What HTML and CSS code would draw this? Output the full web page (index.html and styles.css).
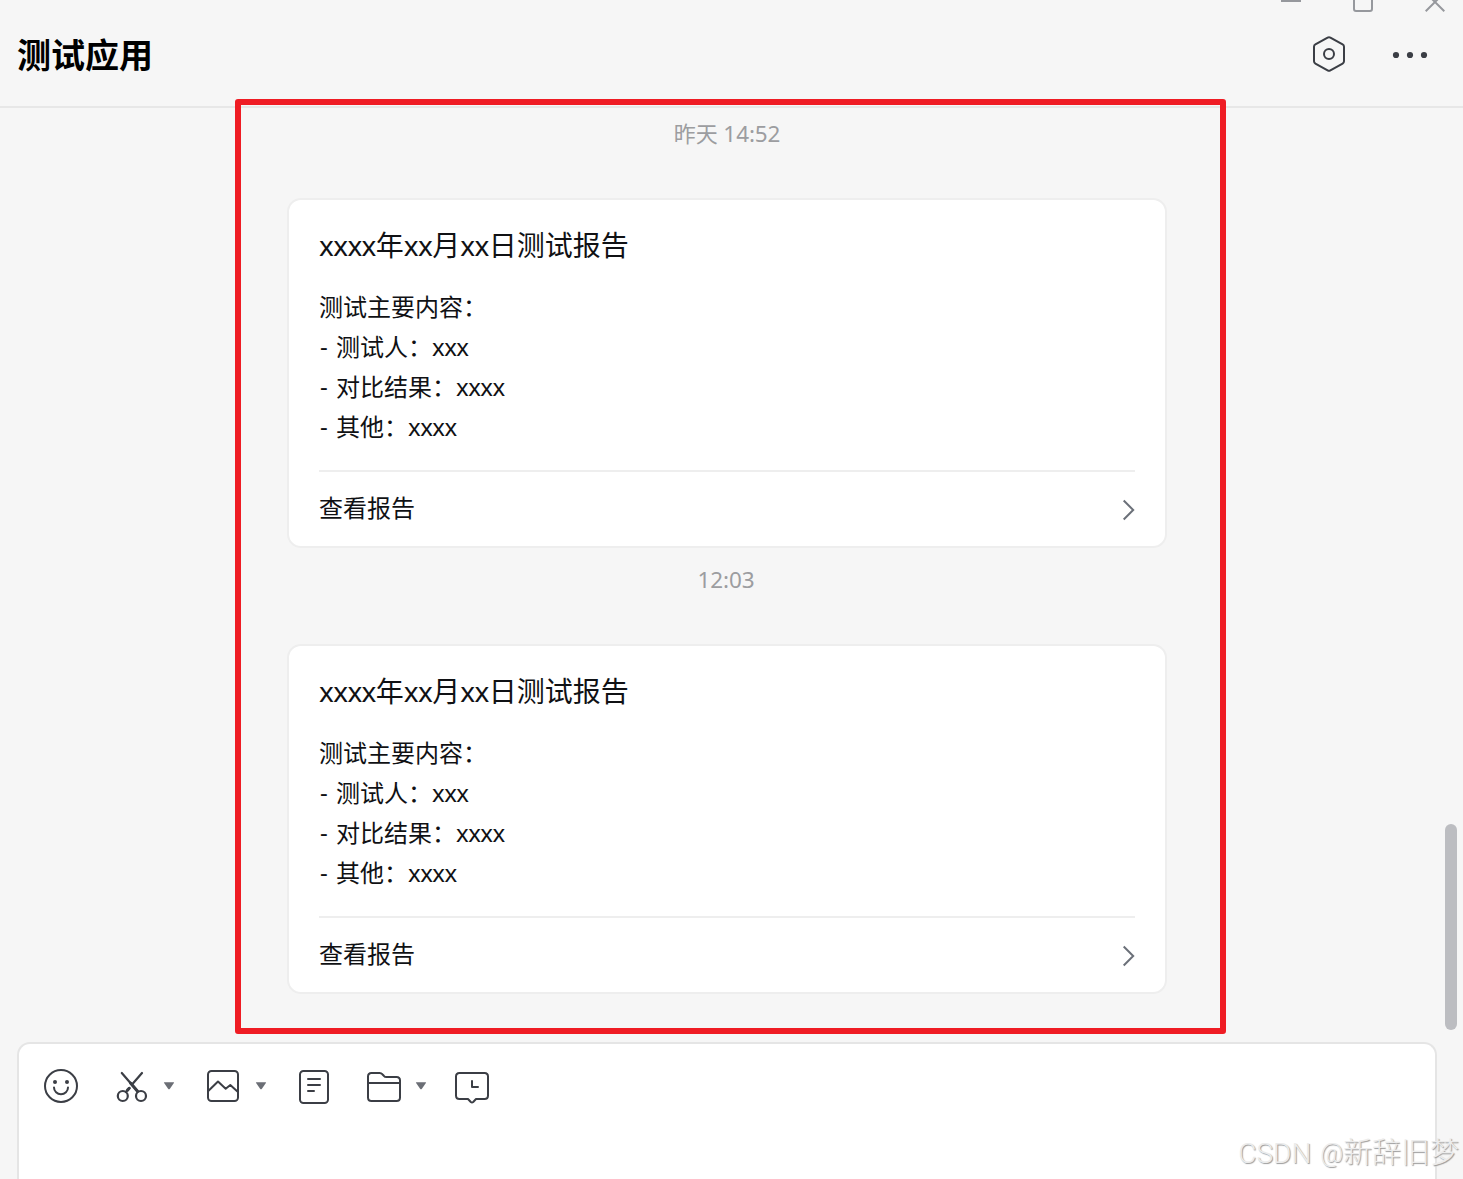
FILE: index.html
```html
<!DOCTYPE html>
<html lang="zh-CN">
<head>
  <meta charset="UTF-8">
  <meta name="viewport" content="width=device-width, initial-scale=1.0">
  <title>测试应用</title>
  <link rel="stylesheet" href="styles.css">
</head>
<body>

  <header class="header">
    <div class="window-controls">
      <svg width="20" height="14" viewBox="0 0 20 14"><path d="M0 1h20"/></svg>
      <svg width="20" height="14" viewBox="0 0 20 14"><rect x="1" y="-7" width="18" height="18" rx="2"/></svg>
      <svg width="20" height="14" viewBox="0 0 20 14"><path d="M.7 -7.3l18.6 18.6M19.3 -7.3L.7 11.3"/></svg>
    </div>
    <div class="header-row">
      <h1>测试应用</h1>
      <div class="header-actions">
        <svg class="icon" width="34" height="38" viewBox="0 0 34 38">
          <path d="M15.6 2.6q1.4-.8 2.8 0l12.2 6.8q1.4.8 1.4 2.3v14.6q0 1.5-1.4 2.3l-12.2 6.8q-1.4.8-2.8 0l-12.2-6.8q-1.4-.8-1.4-2.3v-14.6q0-1.5 1.4-2.3z"/>
          <circle cx="17" cy="19" r="5"/>
        </svg>
        <svg class="dots" width="36" height="38" viewBox="0 0 36 38">
          <circle cx="4" cy="20" r="3.1"/><circle cx="18" cy="20" r="3.1"/><circle cx="32" cy="20" r="3.1"/>
        </svg>
      </div>
    </div>
  </header>

  <main class="chat">
    <div class="time">昨天 <span>14:52</span></div>
    <div class="card">
      <h2><span class="x">xxxx</span>年<span class="x">xx</span>月<span class="x">xx</span>日测试报告</h2>
      <div class="card-body">
        <p>测试主要内容：</p>
        <p><span class="dash">- </span>测试人：<span class="x">xxx</span></p>
        <p><span class="dash">- </span>对比结果：<span class="x">xxxx</span></p>
        <p><span class="dash">- </span>其他：<span class="x">xxxx</span></p>
      </div>
      <div class="card-footer">
        <span>查看报告</span>
        <svg class="arrow" width="13" height="22" viewBox="0 0 13 22"><path d="M1.7 1.5l9.5 9.5-9.5 9.5"/></svg>
      </div>
    </div>

    <div class="time"><span>12:03</span></div>
    <div class="card">
      <h2><span class="x">xxxx</span>年<span class="x">xx</span>月<span class="x">xx</span>日测试报告</h2>
      <div class="card-body">
        <p>测试主要内容：</p>
        <p><span class="dash">- </span>测试人：<span class="x">xxx</span></p>
        <p><span class="dash">- </span>对比结果：<span class="x">xxxx</span></p>
        <p><span class="dash">- </span>其他：<span class="x">xxxx</span></p>
      </div>
      <div class="card-footer">
        <span>查看报告</span>
        <svg class="arrow" width="13" height="22" viewBox="0 0 13 22"><path d="M1.7 1.5l9.5 9.5-9.5 9.5"/></svg>
      </div>
    </div>
    <div class="scrollbar"></div>
    <div class="highlight"></div>
  </main>

  <section class="composer">
    <div class="toolbar">
      <!-- emoji -->
      <svg class="icon emoji" width="34" height="38" viewBox="0 0 34 38">
        <circle cx="17" cy="18" r="16"/>
        <circle class="fill" cx="11" cy="14" r="2"/><circle class="fill" cx="23" cy="14" r="2"/>
        <path d="M10 19.5a7 6.7 0 0 0 14 0"/>
      </svg>
      <!-- screenshot -->
      <svg class="icon scissors" width="32" height="38" viewBox="0 0 32 38">
        <circle cx="6.8" cy="28" r="5"/><circle cx="25" cy="28" r="5"/>
        <path d="M5.8 5l16 18.500M26 5L16 16.500M13.500 20l-3.700 4"/>
        <path class="thick" d="M14.5 15l7 8.200M13.200 20.300l-1.700 1.800"/>
      </svg>
      <svg class="caret" width="12" height="38" viewBox="0 0 12 38"><path d="M1.5 14.2h9q1 0 .4.9l-4 5.7q-.9 1-1.8 0l-4-5.7q-.6-.9.4-.9z"/></svg>
      <!-- image -->
      <svg class="icon image" width="32" height="38" viewBox="0 0 32 38">
        <rect x="1" y="3" width="30" height="30" rx="3.5"/>
        <path d="M1.5 22.8l9.5-9.3 7.7 7.2 4.6-3.7 7.7 7"/>
      </svg>
      <svg class="caret" width="12" height="38" viewBox="0 0 12 38"><path d="M1.5 14.2h9q1 0 .4.9l-4 5.7q-.9 1-1.8 0l-4-5.7q-.6-.9.4-.9z"/></svg>
      <!-- document -->
      <svg class="icon doc" width="30" height="38" viewBox="0 0 30 38">
        <rect x="1" y="3" width="28" height="32" rx="3.5"/>
        <path d="M9 11h12M9 17h12M9 23h6"/>
      </svg>
      <!-- folder -->
      <svg class="icon folder" width="34" height="38" viewBox="0 0 34 38">
        <path d="M4.5 5h8q1.8 0 2.8 1.2l1.5 1.6q1 1.2 2.7 1.2h10q3.5 0 3.5 3.5v17q0 3.5-3.5 3.5h-25q-3.5 0-3.5-3.5v-21q0-3.5 3.5-3.5zM1 15h32"/>
      </svg>
      <svg class="caret" width="12" height="38" viewBox="0 0 12 38"><path d="M1.5 14.2h9q1 0 .4.9l-4 5.7q-.9 1-1.8 0l-4-5.7q-.6-.9.4-.9z"/></svg>
      <!-- history -->
      <svg class="icon history" width="34" height="38" viewBox="0 0 34 38">
        <path d="M4.5 5h25q3.5 0 3.5 3.5v19q0 3.5-3.5 3.5h-8.5l-2.8 3q-1.2 1-2.4 0l-2.8-3h-8.5q-3.5 0-3.5-3.5v-19q0-3.5 3.5-3.5zM17 13v6h6"/>
      </svg>
    </div>
  </section>

  <div class="watermark">CSDN <span class="at">@</span><span class="name">新辞旧梦</span></div>

</body>
</html>
```
FILE: styles.css
```css
* {
  box-sizing: border-box;
  margin: 0;
  padding: 0;
}
body {
  position: relative;
  display: flex;
  flex-direction: column;
  height: 1179px;
  overflow: hidden;
  background-color: #f6f6f6;
  color: #101114;
  font-family: "Noto Sans", "Noto Sans CJK SC", sans-serif;
}
svg {
  display: block;
  fill: none;
}

.header {
  height: 108px;
  border-bottom: 2px solid #e7e7e7;
}
.window-controls {
  display: flex;
  justify-content: flex-end;
  gap: 52px;
  height: 14px;
  padding-right: 18px;
  stroke: #96989d;
  stroke-width: 2;
}
.header-row {
  display: flex;
  justify-content: space-between;
  padding: 15px 35px 0 17px;
}
h1 {
  color: #000;
  font-family: "Noto Sans CJK SC", sans-serif;
  font-size: 34px;
  line-height: 50px;
}
.header-actions {
  display: flex;
  gap: 46px;
  padding-top: 6px;
}
.icon {
  stroke: #3b3e45;
  stroke-width: 2;
  stroke-linecap: round;
  stroke-linejoin: round;
}
.icon .fill {
  fill: #3b3e45;
  stroke: none;
}
.dots {
  fill: #3b3e45;
}

.chat {
  display: flex;
  flex-direction: column;
  align-items: center;
  height: 934px;
  padding-right: 9px;
}
.time {
  height: 96px;
  padding: 16px 2px 0 0;
  color: #9c9da0;
  font-size: 22px;
  line-height: 30px;
}
.time:first-child {
  height: 90px;
  padding: 10px 0 0;
}
.time span {
  font-size: 22.5px;
  letter-spacing: -0.1px;
}
.card {
  width: 880px;
  height: 350px;
  padding: 25px 30px 0;
  border: 2px solid #eee;
  border-radius: 14px;
  background-color: #fff;
}
.card h2 {
  font-size: 28px;
  font-weight: normal;
  line-height: 40px;
  height: 40px;
  white-space: nowrap;
}
.card-body {
  margin: 22px 0 23px;
  font-size: 24px;
}
.card-body p {
  height: 40px;
  line-height: 40px;
}
.x {
  letter-spacing: -0.022em;
}
.dash {
  margin-left: 1px;
  letter-spacing: 1px;
  vertical-align: 1px;
  line-height: 1;
}
.card-footer {
  display: flex;
  justify-content: space-between;
  align-items: center;
  height: 76px;
  border-top: 2px solid #eee;
  font-size: 24px;
}
.card-footer span {
  padding-bottom: 2px;
  line-height: 40px;
}
.arrow {
  margin-top: 2px;
  stroke: #6b7079;
  stroke-width: 2;
}

.scrollbar {
  position: absolute;
  top: 824px;
  right: 6px;
  width: 12px;
  height: 206px;
  border-radius: 6px;
  background-color: #bcbdc1;
}
/* red box around the messages */
.highlight {
  position: absolute;
  top: 99px;
  left: 235px;
  width: 991px;
  height: 935px;
  border: 6px solid #ef1c24;
  border-radius: 3px;
}

.composer {
  flex: 1;
  margin: 0 26px 0 17px;
  padding: 24px 25px 0;
  border: 2px solid #e5e5e5;
  border-bottom: none;
  border-radius: 13px 13px 0 0;
  background-color: #fff;
}
.toolbar {
  display: flex;
}
.scissors {
  margin-left: 38px;
  stroke-width: 2.2;
}
.scissors .thick {
  stroke-width: 3;
}
.caret {
  margin-left: 15px;
  fill: #6b6e75;
}
.image {
  margin-left: 32px;
}
.image + .caret {
  margin-left: 16px;
}
.doc {
  margin-left: 32px;
}
.folder {
  margin-left: 38px;
}
.folder + .caret {
  margin-left: 14px;
}
.history {
  margin-left: 28px;
}

.watermark {
  position: absolute;
  right: 4px;
  top: 1129px;
  color: #ececec;
  font-family: Roboto, sans-serif;
  font-size: 28px;
  font-weight: 300;
  line-height: 42px;
  text-shadow: 1px 1px 1px #999;
  white-space: nowrap;
}
.watermark .at {
  margin-left: 2px;
  font-size: 25px;
  vertical-align: 1px;
}
.watermark .name {
  font-family: "Noto Sans CJK SC", sans-serif;
  font-size: 29px;
}
```
